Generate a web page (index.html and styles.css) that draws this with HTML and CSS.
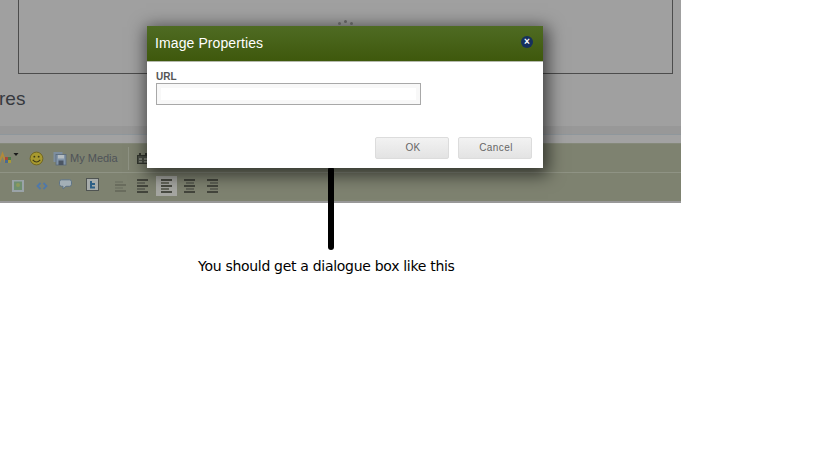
FILE: index.html
```html
<!DOCTYPE html>
<html lang="en">
<head>
<meta charset="utf-8">
<title>Image Properties</title>
<link rel="stylesheet" href="styles.css">
</head>
<body>
<div class="shot">
  <div class="editor">
    <div class="frame"></div>
    <div class="heading">res</div>
    <div class="band"></div>
    <div class="band-light"></div>
    <div class="toolbar row-one">
      <svg class="ico colors" viewBox="0 0 19 14"><path d="M-1 12 L2.500 3 L6 12" fill="none" stroke="#b08a3c" stroke-width="2"/><rect x="5" y="6" width="3" height="3" fill="#a8483c"/><rect x="8" y="6" width="3" height="3" fill="#4b7a45"/><rect x="5" y="9" width="3" height="3" fill="#4a6a94"/><rect x="8" y="9" width="3" height="3" fill="#a79a35"/><path d="M13.500 2h5l-2.500 3z" fill="#1a1a1a"/></svg>
      <svg class="ico smile" viewBox="0 0 16 16"><circle cx="8" cy="8" r="6.800" fill="#a89a30" stroke="#6f6420"/><circle cx="5.700" cy="6" r="1" fill="#3d3a18"/><circle cx="10.300" cy="6" r="1" fill="#3d3a18"/><path d="M4 9.500 Q8 14 12 9.500" fill="none" stroke="#3d3a18" stroke-width="1.200"/></svg>
      <svg class="ico media" viewBox="0 0 14 14"><rect x="0.500" y="0.500" width="9" height="10" fill="#7d8e9f"/><rect x="3" y="3" width="10" height="10.500" fill="#8295a8" stroke="#5a6a7a" stroke-width="0.800"/><rect x="5" y="3.500" width="6" height="3.500" fill="#b4bcc0"/><rect x="5.500" y="9" width="5" height="4.500" fill="#4a5563"/></svg>
      <span class="media-label">My Media</span>
      <span class="divider"></span>
      <svg class="ico cal" viewBox="0 0 12 11"><rect x="0.500" y="2.500" width="11" height="8" fill="#4a4e45" stroke="#33362f"/><rect x="2" y="0" width="2" height="3" fill="#33362f"/><rect x="8" y="0" width="2" height="3" fill="#33362f"/><rect x="2" y="5" width="3" height="2" fill="#80847a"/><rect x="7" y="5" width="3" height="2" fill="#80847a"/><rect x="2" y="8" width="3" height="1.500" fill="#80847a"/><rect x="7" y="8" width="3" height="1.500" fill="#80847a"/></svg>
    </div>
    <div class="toolbar row-two">
      <svg class="ico pic" viewBox="0 0 12 12"><rect width="12" height="12" fill="#9aa3a8"/><rect x="2" y="1.500" width="8" height="8.500" fill="#6f8f70"/><circle cx="6" cy="5" r="2" fill="#8c9a5c"/></svg>
      <svg class="ico code" viewBox="0 0 12 8"><path d="M4.500 1 L1.500 4 L4.500 7 M7.500 1 L10.500 4 L7.500 7" fill="none" stroke="#4f78aa" stroke-width="1.800"/></svg>
      <svg class="ico bubble" viewBox="0 0 13 11"><path d="M2.500 0.800h8a2 2 0 0 1 2 2v2.500a2 2 0 0 1-2 2H7L4 10V7.300H2.500a2 2 0 0 1-2-2V2.800a2 2 0 0 1 2-2z" fill="#a3afb6" stroke="#5f7486"/></svg>
      <svg class="ico tweet" viewBox="0 0 13 14"><rect x="0.500" y="0.500" width="12" height="12" fill="#a7acab" stroke="#4f5452"/><path d="M5 3v6.500h4M5 6h4" fill="none" stroke="#2d5f86" stroke-width="2"/></svg>
      <span class="align faded"><i class="l s"></i><i class="l"></i><i class="l s"></i><i class="l"></i></span>
      <span class="align second"><i class="l"></i><i class="l s"></i><i class="l"></i><i class="l s"></i><i class="l"></i></span>
      <span class="align active"><i class="l"></i><i class="l s"></i><i class="l"></i><i class="l s"></i><i class="l"></i></span>
      <span class="align center"><i class="l"></i><i class="l s"></i><i class="l"></i><i class="l s"></i><i class="l"></i></span>
      <span class="align right"><i class="l"></i><i class="l s"></i><i class="l"></i><i class="l s"></i><i class="l"></i></span>
    </div>
    <div class="edge"></div>
    <div class="dialog">
      <div class="dialog-head">
        <span class="dialog-title">Image Properties</span>
        <span class="close">×</span>
      </div>
      <div class="dialog-body">
        <label class="field-label">URL</label>
        <div class="field"></div>
      </div>
      <div class="dialog-foot">
        <span class="btn">OK</span>
        <span class="btn">Cancel</span>
      </div>
    </div>
    <div class="spinner"><i></i><i class="up"></i><i></i></div>
    <div class="arrow"></div>
  </div>
  <p class="caption">You should get a dialogue box like this</p>
</div>
</body>
</html>
```
FILE: styles.css
```css
html, body { margin: 0; padding: 0; background: #fff; }
body { width: 819px; height: 460px; overflow: hidden; }
.shot { width: 819px; }
.editor { position: relative; width: 681px; height: 203px; background: #a0a0a0; display: flex; flex-direction: column; }
.frame { flex: none; box-sizing: border-box; width: 655px; height: 74px; margin-left: 18px; border: 1px solid #4c4c4c; border-top: 0; }
.heading { flex: none; height: 52px; padding-top: 14px; box-sizing: border-box; margin-left: -1px; font: 19px/22px "Liberation Sans", Arial, sans-serif; color: #36393e; }
.band { flex: none; height: 9px; background: #989898; border-bottom: 1px solid #8f979c; box-sizing: border-box; }
.band-light { flex: none; height: 8px; background: #a2a2a2; }
.toolbar { flex: none; box-sizing: border-box; display: flex; align-items: center; background: #7e8270; position: relative; }
.row-one { height: 30px; border-top: 1px solid #85897a; border-bottom: 1px solid #8f9384; }
.row-two { height: 28px; padding-bottom: 2px; }
.edge { flex: 1; background: #989898; }
.ico { flex: none; display: block; filter: blur(0.300px); }
.colors { width: 19px; height: 14px; }
.smile { width: 15px; height: 15px; margin-left: 10px; }
.media { width: 14px; height: 15px; margin-left: 9px; }
.media-label { margin-left: 3px; font: 11px/14px "Liberation Sans", Arial, sans-serif; color: #4e5358; }
.divider { width: 1px; height: 23px; margin-left: 10px; background: #8f9384; }
.cal { width: 12px; height: 11px; margin-left: 8px; }
.pic { width: 12px; height: 12px; margin-left: 12px; }
.code { width: 12px; height: 8px; margin-left: 12px; }
.bubble { width: 13px; height: 11px; margin-left: 11px; margin-top: -3px; }
.tweet { width: 13px; height: 14px; margin-left: 14px; margin-top: -2px; }
.align { flex: none; box-sizing: border-box; width: 21px; height: 20px; display: flex; flex-direction: column; align-items: flex-start; justify-content: center; gap: 1px; padding: 0 5px; filter: blur(0.400px); }
.align .l { display: block; width: 11px; height: 2px; background: #383b32; opacity: 0.850; }
.align .s { width: 8px; background: #585c50; }
.align.faded { margin-left: 11px; opacity: 0.350; }
.align.second { margin-left: 1px; }
.align.active { background: #a5a6a1; margin-left: 3px; }
.align.center { align-items: center; margin-left: 2px; }
.align.right { align-items: flex-end; margin-left: 2px; }
.dialog { position: absolute; left: 147px; top: 26px; width: 396px; height: 142px; display: flex; flex-direction: column; background: #fff; box-shadow: 2px 4px 16px 3px rgba(0,0,0,0.600); }
.dialog-head { flex: none; box-sizing: border-box; height: 36px; display: flex; align-items: center; justify-content: space-between; padding: 0 10px 3px 8px; background: linear-gradient(#4f6b23, #3e580c); border-bottom: 1px solid #b5b9ad; }
.dialog-title { font: 14px/17px "Liberation Sans", Arial, sans-serif; letter-spacing: 0.100px; color: #fff; margin-top: 3px; }
.close { width: 12px; height: 12px; border-radius: 50%; background: #16305e; color: #fff; font: bold 10px/12px "Liberation Sans", Arial, sans-serif; text-align: center; }
.dialog-body { flex: 1; padding: 9px 9px 0; }
.field-label { display: block; font: bold 10px/12px "Liberation Sans", Arial, sans-serif; color: #555; }
.field { box-sizing: border-box; width: 265px; height: 22px; background: #fff; border: 1px solid #a8a8a8; box-shadow: inset 0 0 0 4px #f8f8f8; }
.dialog-foot { flex: none; display: flex; justify-content: flex-end; gap: 9px; padding: 0 11px 9px 0; }
.btn { box-sizing: border-box; width: 74px; height: 22px; border: 1px solid #dcdcdc; border-radius: 2px; background: linear-gradient(#f2f2f2, #e3e3e3); font: 10px/20px "Liberation Sans", Arial, sans-serif; letter-spacing: 0.400px; color: #666; text-align: center; padding-left: 2px; }
.spinner { position: absolute; left: 338px; top: 20px; display: flex; gap: 3px; align-items: flex-end; }
.spinner i { display: block; width: 3px; height: 3px; border-radius: 50%; background: #5c5c5c; }
.spinner .up { margin-bottom: 2px; }
.arrow { position: absolute; left: 328px; top: 168px; width: 6px; height: 82px; background: #000; border-radius: 1px 1px 3px 3px; }
.caption { margin: 54px 0 0 198px; font: 14px/18px "DejaVu Sans", sans-serif; letter-spacing: -0.300px; color: #000; }
```
